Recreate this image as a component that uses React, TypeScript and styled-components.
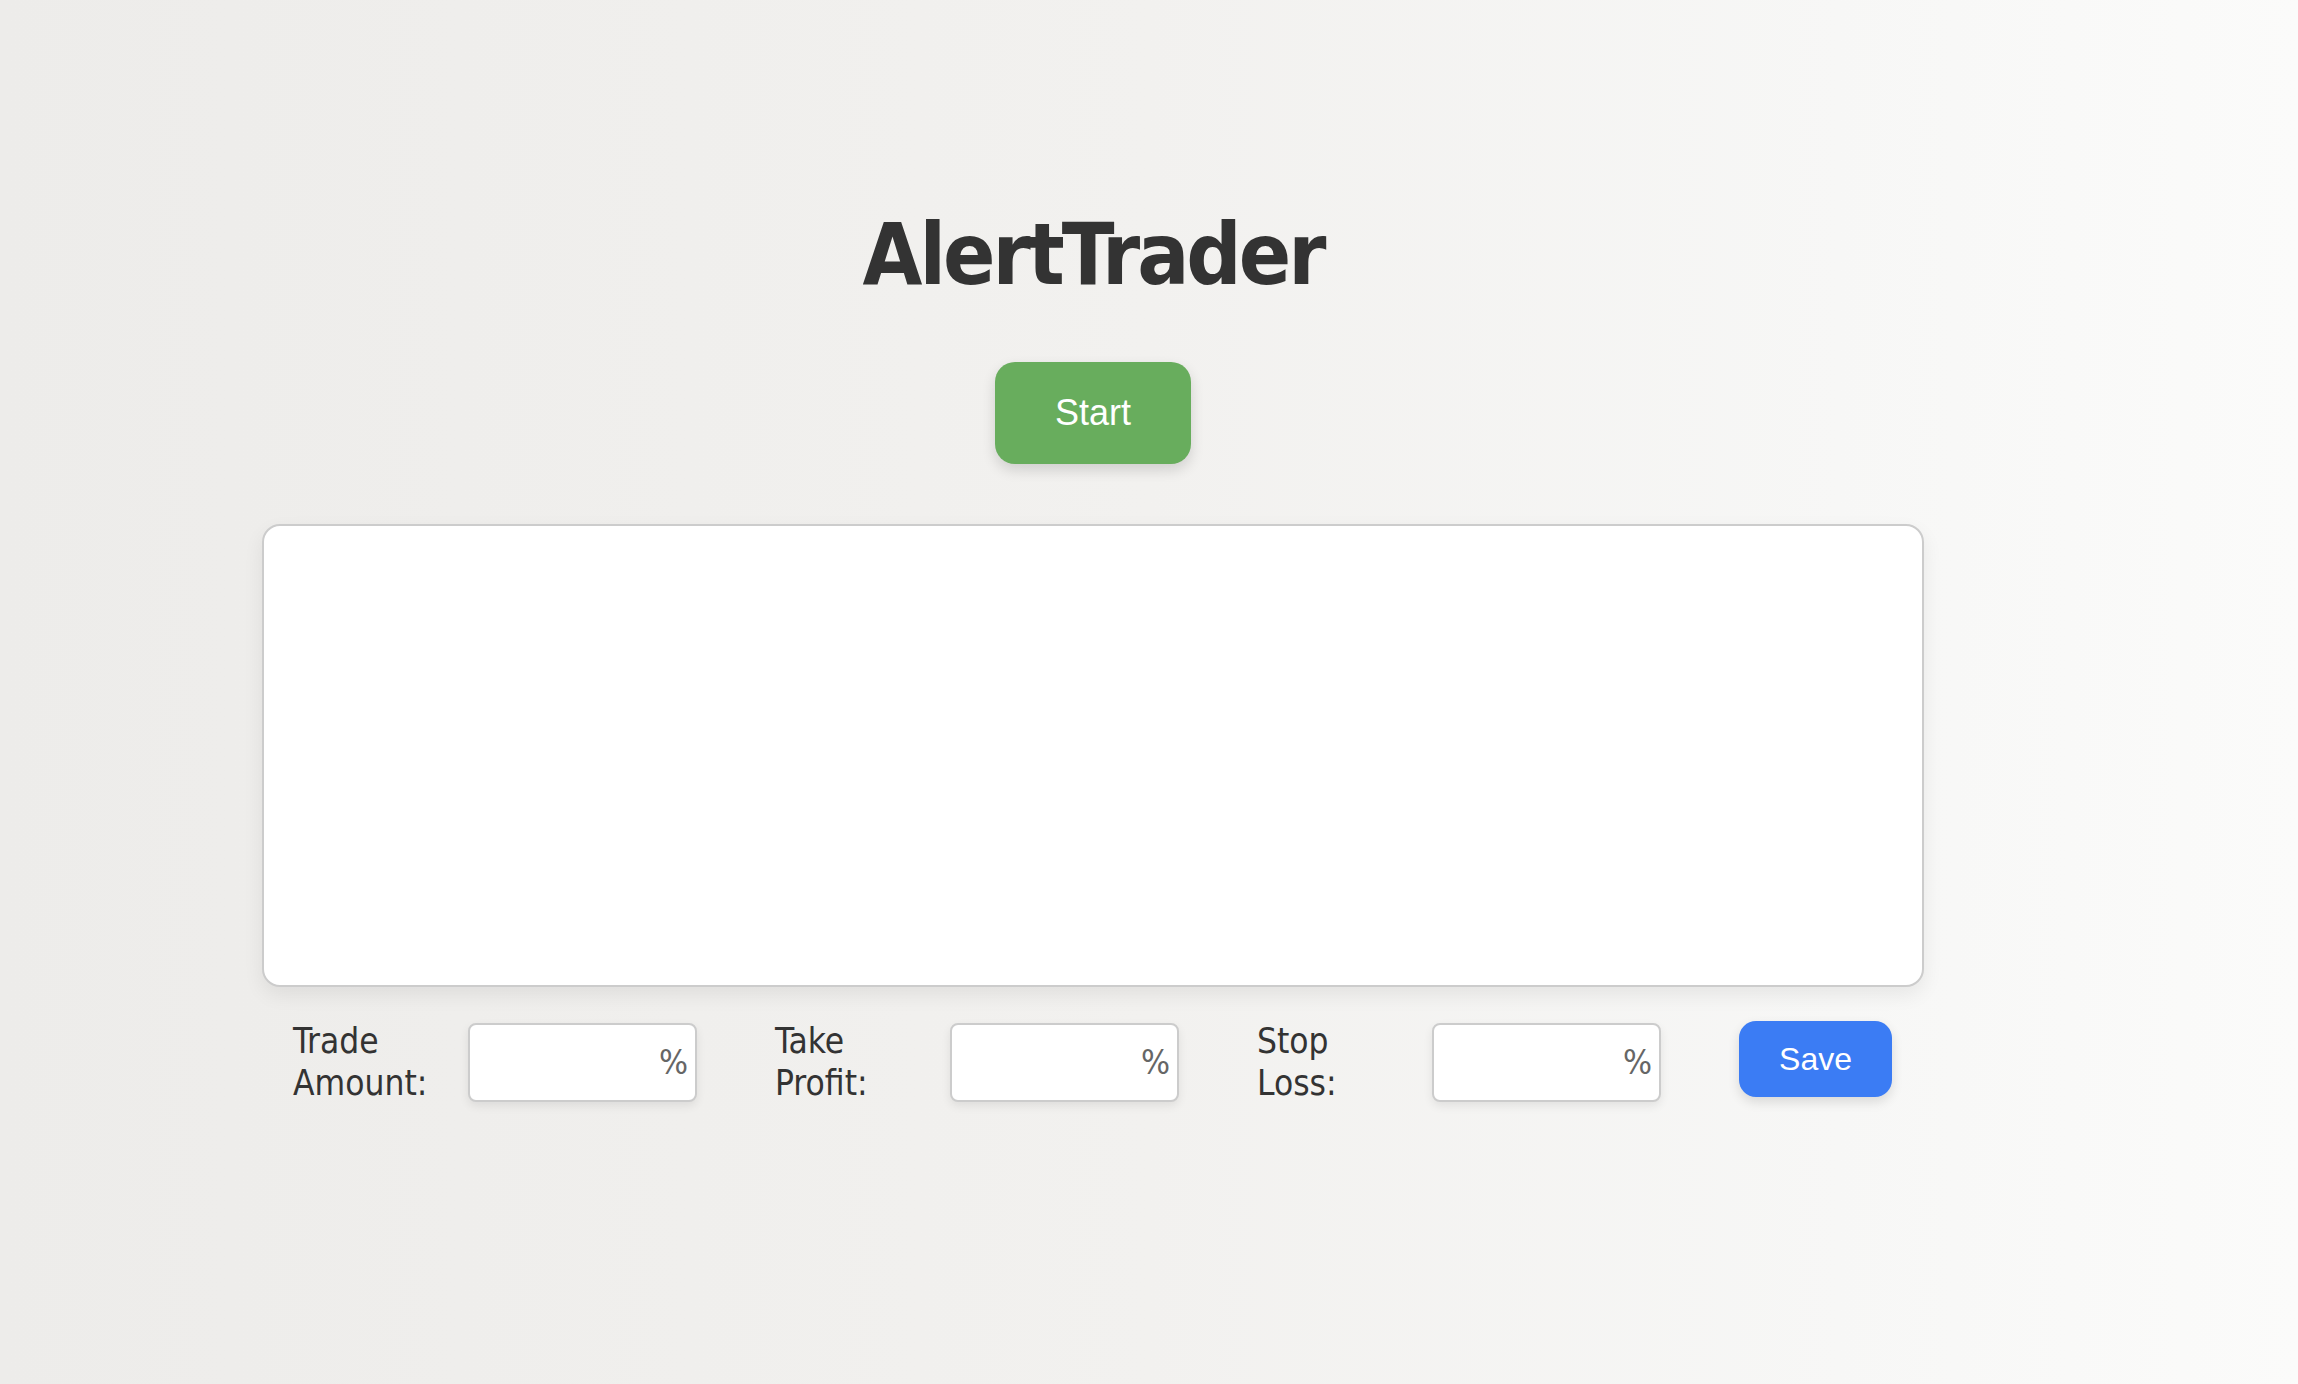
import styled, { createGlobalStyle } from 'styled-components';
import { useState } from 'react';

const GlobalStyle = createGlobalStyle`
  html, body {
    margin: 0;
    padding: 0;
  }
  body {
    background: linear-gradient(to right, #edecea 0%, #f2f1ef 50%, #f7f7f6 80%, #fbfbfa 100%);
    font-family: 'DejaVu Sans Condensed', 'DejaVu Sans', sans-serif;
    color: #333333;
  }
`;

const fields = [
  { key: 'amount', top: 'Trade', bottom: 'Amount:' },
  { key: 'profit', top: 'Take', bottom: 'Profit:' },
  { key: 'loss', top: 'Stop', bottom: 'Loss:' },
];

const App = () => {
  const [values, setValues] = useState<Record<string, string>>({
    amount: '',
    profit: '',
    loss: '',
  });
  const [running, setRunning] = useState(false);

  const handleChange = (key: string, value: string) => {
    setValues({ ...values, [key]: value });
  };

  return (
    <Page>
      <GlobalStyle />
      <Container>
        <Title>AlertTrader</Title>
        <StartButton onClick={() => setRunning(!running)}>
          {running ? 'Stop' : 'Start'}
        </StartButton>
        <LogPanel />
        <SettingsRow>
          {fields.map(field => (
            <FieldGroup key={field.key}>
              <FieldLabel>
                {field.top}
                <br />
                {field.bottom}
              </FieldLabel>
              <InputWrapper>
                <PercentInput
                  value={values[field.key]}
                  onChange={e => handleChange(field.key, e.target.value)}
                />
                <PercentSign>%</PercentSign>
              </InputWrapper>
            </FieldGroup>
          ))}
          <SaveButton>Save</SaveButton>
        </SettingsRow>
      </Container>
    </Page>
  );
};

const Page = styled.div`
  height: 100vh;
  overflow: hidden;
  padding: 0 374px 0 262px;
  box-sizing: border-box;
`;

const Container = styled.div`
  width: 1662px;
  display: flex;
  flex-direction: column;
  align-items: center;
  padding-top: 200px;
`;

const Title = styled.h1`
  margin: 0;
  font-family: 'DejaVu Sans Condensed', 'DejaVu Sans', sans-serif;
  font-weight: bold;
  font-size: 86px;
  line-height: 108px;
  letter-spacing: -3px;
  color: #333333;
`;

const StartButton = styled.button`
  margin-top: 54px;
  width: 196px;
  height: 102px;
  border: none;
  border-radius: 20px;
  background-color: #68ad5d;
  color: white;
  font-family: 'Liberation Sans', Arial, sans-serif;
  font-size: 36px;
  box-shadow: 0 6px 14px rgba(0, 0, 0, 0.14);
  cursor: pointer;
`;

const LogPanel = styled.div`
  margin-top: 60px;
  width: 100%;
  height: 463px;
  box-sizing: border-box;
  background: #ffffff;
  border: 2px solid #cccccc;
  border-radius: 18px;
  box-shadow: 0 8px 20px rgba(0, 0, 0, 0.07);
`;

const SettingsRow = styled.div`
  align-self: stretch;
  display: flex;
  align-items: center;
  gap: 78px;
  margin-top: 33px;
  padding-left: 31px;
`;

const FieldGroup = styled.div`
  display: flex;
  align-items: center;
  gap: 20px;
`;

const FieldLabel = styled.label`
  width: 155px;
  font-size: 35px;
  line-height: 42px;
  color: #333333;
`;

const InputWrapper = styled.div`
  position: relative;
  width: 229px;
  height: 79px;
`;

const PercentInput = styled.input`
  width: 100%;
  height: 100%;
  box-sizing: border-box;
  padding: 0 44px 0 14px;
  border: 2px solid #cccccc;
  border-radius: 8px;
  background: #ffffff;
  font-family: 'DejaVu Sans', sans-serif;
  font-size: 30px;
  color: #333333;
  box-shadow: 0 4px 10px rgba(0, 0, 0, 0.08);
  outline: none;
`;

const PercentSign = styled.span`
  position: absolute;
  right: 9px;
  top: 50%;
  transform: translateY(-50%);
  font-size: 34px;
  color: #666666;
  pointer-events: none;
`;

const SaveButton = styled.button`
  width: 153px;
  height: 76px;
  margin-bottom: 6px;
  border: none;
  border-radius: 17px;
  background-color: #3b7cf4;
  color: white;
  font-family: 'Liberation Sans', Arial, sans-serif;
  font-size: 32px;
  box-shadow: 0 5px 12px rgba(0, 0, 0, 0.12);
  cursor: pointer;
`;

export default App;
